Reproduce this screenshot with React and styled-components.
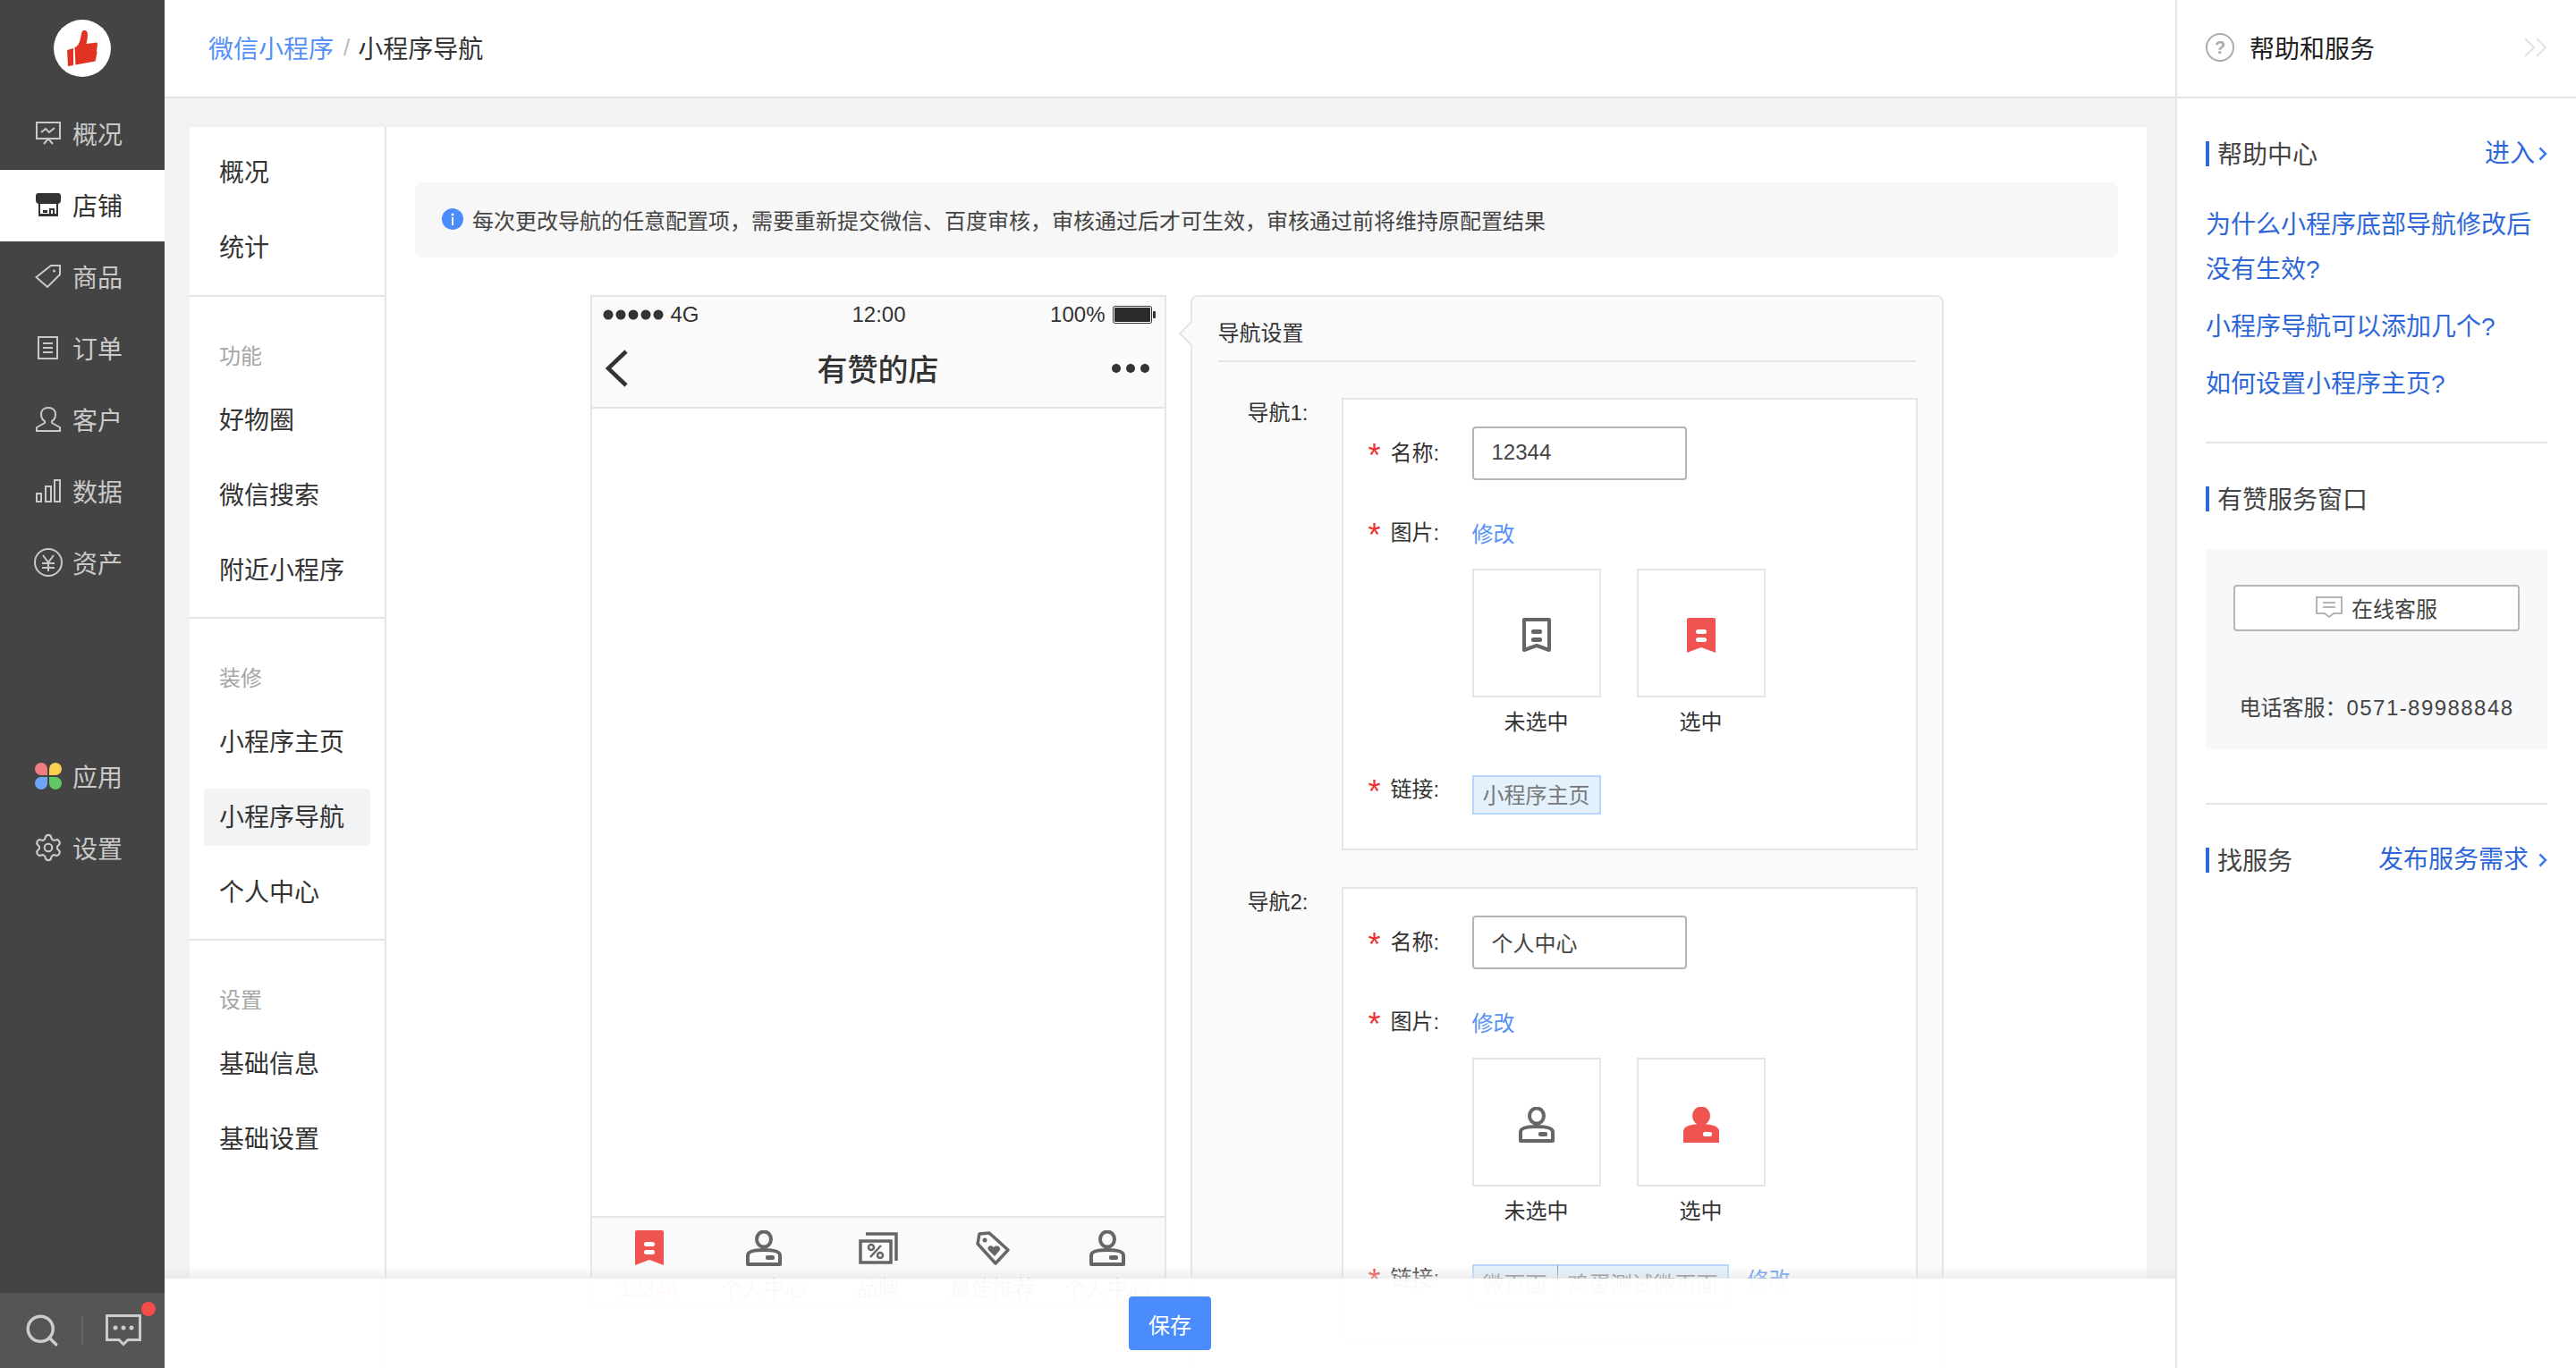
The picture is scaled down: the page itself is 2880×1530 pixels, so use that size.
import React from "react";
import styled, { createGlobalStyle } from "styled-components";
import { Search, Settings } from "lucide-react";

const GlobalStyle = createGlobalStyle`
  html, body {
    margin: 0;
    padding: 0;
    height: 1530px;
    overflow: hidden;
    background: #f2f2f2;
    color: #333;
    font-family: "Liberation Sans", "Noto Sans CJK SC", sans-serif;
    font-size: 24px;
  }
  * { box-sizing: border-box; }
`;

const Page = styled.div`
  display: flex;
  width: 2880px;
  height: 1530px;
  overflow: hidden;
`;

/* left dark bar */
const Sidebar = styled.aside`
  width: 184px;
  height: 100%;
  flex-shrink: 0;
  display: flex;
  flex-direction: column;
  background: #444;
`;

const LogoWrap = styled.div`
  height: 110px;
  flex-shrink: 0;
  padding-bottom: 2px;
  display: flex;
  align-items: center;
  justify-content: center;
`;

const Logo = styled.div`
  width: 64px;
  height: 64px;
  border-radius: 50%;
  background: #fff;
  display: flex;
  align-items: center;
  justify-content: center;
`;

const SideList = styled.div`
  display: flex;
  flex-direction: column;
  margin-top: ${({ $top }) => $top || 0}px;
`;

const SideItem = styled.div`
  height: 80px;
  padding: 0 0 2px 40px;
  display: flex;
  align-items: center;
  gap: 13px;
  font-size: 28px;
  color: ${({ $active }) => ($active ? "#333" : "#c9c9c9")};
  background: ${({ $active }) => ($active ? "#fff" : "transparent")};
`;

const SideIcon = styled.span`
  width: 28px;
  height: 32px;
  display: flex;
  align-items: center;
  justify-content: center;
  svg { flex-shrink: 0; }
`;

const SideBottom = styled.div`
  margin-top: auto;
  height: 84px;
  background: #555;
  display: flex;
  align-items: center;
  position: relative;
  padding-left: 26px;
`;

const BottomDivider = styled.span`
  width: 2px;
  height: 32px;
  margin: 0 25px 0 23px;
  background: #666;
`;

const RedDot = styled.span`
  position: absolute;
  left: 158px;
  top: 10px;
  width: 16px;
  height: 16px;
  border-radius: 50%;
  background: #f44c4c;
`;

/* middle column */
const Main = styled.main`
  flex: 1;
  min-width: 0;
  height: 100%;
  display: flex;
  flex-direction: column;
  position: relative;
  overflow: hidden;
`;

const Breadcrumb = styled.header`
  height: 110px;
  flex-shrink: 0;
  padding-left: 49px;
  padding-bottom: 2px;
  display: flex;
  align-items: center;
  background: #fff;
  border-bottom: 2px solid #e5e5e5;
  font-size: 28px;
`;

const CrumbLink = styled.span`
  color: #5591f7;
`;

const CrumbSep = styled.span`
  margin: 0 9px 0 11px;
  color: #bbb;
  font-size: 26px;
`;

const Content = styled.div`
  flex: 1;
  min-height: 0;
  padding: 32px 32px 0 28px;
  overflow: hidden;
`;

const Card = styled.section`
  display: flex;
  background: #fff;
  min-height: 1500px;
`;

const SubMenu = styled.nav`
  width: 220px;
  flex-shrink: 0;
  border-right: 2px solid #e5e5e5;
`;

const MenuGroup = styled.div`
  padding: ${({ $first }) => ($first ? "19px 0 1px" : "48px 0 0")};
  border-bottom: ${({ $last }) => ($last ? "none" : "2px solid #e5e5e5")};
`;

const MenuLabel = styled.div`
  height: 36px;
  line-height: 38px;
  margin: 0 0 22px 33px;
  color: #a5a5a5;
  font-size: 24px;
`;

const MenuItem = styled.div`
  width: 186px;
  height: 64px;
  line-height: 66px;
  margin: 0 0 20px 16px;
  padding-left: 17px;
  border-radius: 4px;
  font-size: 28px;
  color: #333;
  white-space: nowrap;
  background: ${({ $active }) => ($active ? "#f2f3f5" : "transparent")};
`;

const Pane = styled.div`
  flex: 1;
  min-width: 0;
  padding: 62px 32px 0;
`;

const Notice = styled.div`
  height: 84px;
  padding: 0 0 2px 30px;
  display: flex;
  align-items: center;
  gap: 10px;
  border-radius: 8px;
  background: #f7f7f7;
  color: #444;
`;

const InfoDot = styled.span`
  width: 24px;
  height: 24px;
  flex-shrink: 0;
`;

const Preview = styled.div`
  margin-top: 42px;
  display: flex;
  justify-content: center;
  align-items: flex-start;
  gap: 27px;
`;

/* phone mock */
const Phone = styled.div`
  width: 644px;
  flex-shrink: 0;
  border: 2px solid #e5e5e5;
  background: #fff;
`;

const PhoneTop = styled.div`
  height: 125px;
  background: #fafafa;
  border-bottom: 2px solid #e5e5e5;
`;

const StatusBar = styled.div`
  height: 40px;
  padding: 0 10px 0 12px;
  display: flex;
  align-items: center;
  justify-content: space-between;
  font-size: 24px;
  color: #333;
`;

const StatusSide = styled.div`
  width: 180px;
  display: flex;
  align-items: center;
  justify-content: ${({ $end }) => ($end ? "flex-end" : "flex-start")};
  gap: 8px;
`;

const TitleBar = styled.div`
  height: 81px;
  padding: 0 16px 2px 14px;
  display: grid;
  grid-template-columns: 1fr auto 1fr;
  align-items: center;
  justify-items: start;

  & > :last-child { justify-self: end; }
`;

const PhoneTitle = styled.div`
  font-size: 34px;
  color: #333;
  font-weight: 500;
  margin-left: 2px;
`;

const PhoneBody = styled.div`
  height: 903px;
`;

const TabBar = styled.div`
  display: grid;
  grid-template-columns: repeat(5, 1fr);
  height: 102px;
  padding-top: 14px;
  background: #fafafa;
  border-top: 2px solid #e5e5e5;
`;

const Tab = styled.div`
  display: flex;
  flex-direction: column;
  align-items: center;
  font-size: 24px;
  color: ${({ $active }) => ($active ? "#f05451" : "#666")};
`;

const TabIcon = styled.div`
  height: 40px;
  display: flex;
  align-items: center;
  justify-content: center;
`;

const TabText = styled.div`
  line-height: 36px;
  margin-top: 8px;
`;

/* settings panel */
const SetPanel = styled.div`
  width: 842px;
  flex-shrink: 0;
  position: relative;
  padding: 23px 29px 60px;
  border: 2px solid #e5e5e5;
  border-radius: 8px;
  background: #fafafa;

  &::before {
    content: "";
    position: absolute;
    left: -11px;
    top: 31px;
    width: 18px;
    height: 18px;
    background: #fafafa;
    border-left: 2px solid #e5e5e5;
    border-bottom: 2px solid #e5e5e5;
    transform: rotate(45deg);
  }
`;

const SetTitle = styled.div`
  height: 50px;
  line-height: 36px;
  border-bottom: 2px solid #e5e5e5;
  color: #333;
`;

const NavBlock = styled.div`
  display: flex;
  margin-top: ${({ $top }) => $top}px;
`;

const NavName = styled.div`
  width: 101px;
  margin-right: 37px;
  flex-shrink: 0;
  line-height: 34px;
  text-align: right;
  color: #333;
`;

const NavBox = styled.div`
  width: 644px;
  flex-shrink: 0;
  padding: 30px 28px 38px;
  border: 2px solid #e5e5e5;
  background: #fff;
`;

const Field = styled.div`
  display: flex;
  align-items: ${({ $top }) => ($top ? "flex-start" : "center")};
  min-height: ${({ $h }) => $h}px;
  margin-top: ${({ $mt }) => $mt || 0}px;
`;

const FieldLabel = styled.div`
  width: 116px;
  height: 36px;
  flex-shrink: 0;
  display: flex;
  line-height: 36px;
  color: #333;

  &::before {
    content: "*";
    width: 25px;
    color: #e33;
    font-size: 36px;
    line-height: 42px;
  }
`;

const TextBox = styled.div`
  width: 240px;
  height: 60px;
  padding: 0 0 2px 20px;
  display: flex;
  align-items: center;
  border: 2px solid #b5b5b5;
  border-radius: 4px;
  background: #fff;
  color: #444;
`;

const Action = styled.span`
  color: #5591f7;
  margin-left: ${({ $left }) => $left || 0}px;
  padding-bottom: 2px;
`;

const ImgRow = styled.div`
  margin: 18px 0 0 116px;
  display: flex;
  gap: 40px;
`;

const ImgCol = styled.div`
  width: 144px;
  text-align: center;
`;

const ImgBox = styled.div`
  width: 144px;
  height: 144px;
  padding-top: 6px;
  display: flex;
  align-items: center;
  justify-content: center;
  border: 2px solid #e5e5e5;
`;

const ImgCaption = styled.div`
  margin-top: 10px;
  line-height: 36px;
  color: #333;
`;

const LinkTag = styled.div`
  height: 44px;
  margin-top: 2px;
  padding: 0 10px 3px;
  display: flex;
  align-items: center;
  flex-shrink: 0;
  border: 2px solid #b7d6fb;
  background: #e3f1fd;
  color: #777;
`;

const TagBar = styled.span`
  width: 1px;
  height: 40px;
  margin: 0 11px;
  background: #999;
`;

/* fixed save bar */
const SaveBar = styled.div`
  position: absolute;
  left: 0;
  right: 0;
  bottom: 0;
  height: 100px;
  display: flex;
  align-items: center;
  justify-content: center;
  background: rgba(255, 255, 255, 0.96);

  &::before {
    content: "";
    position: absolute;
    left: 0;
    right: 0;
    top: -14px;
    height: 14px;
    background: linear-gradient(to bottom, rgba(225, 225, 225, 0), rgba(225, 225, 225, 0.55));
  }
`;

const SaveButton = styled.button`
  width: 92px;
  height: 60px;
  padding: 0;
  border: none;
  border-radius: 4px;
  background: #4a8cfb;
  color: #fff;
  font-family: inherit;
  font-size: 24px;
`;

/* right help panel */
const Help = styled.aside`
  width: 448px;
  height: 100%;
  flex-shrink: 0;
  background: #fff;
  border-left: 2px solid #e5e5e5;
`;

const HelpHead = styled.div`
  height: 110px;
  padding: 0 32px 2px;
  display: flex;
  align-items: center;
  border-bottom: 2px solid #e5e5e5;
  color: #222;
  font-size: 28px;
`;

const HelpBadge = styled.span`
  width: 32px;
  height: 32px;
  margin-right: 17px;
  display: flex;
  align-items: center;
  justify-content: center;
  border: 2px solid #aaa;
  border-radius: 50%;
  color: #aaa;
  font-size: 20px;
  font-weight: 700;
`;

const HelpFold = styled.span`
  margin-left: auto;
  display: flex;
`;

const HelpBody = styled.div`
  padding: 48px 32px 0;
`;

const SectionHead = styled.div`
  height: 28px;
  display: flex;
  align-items: center;
  justify-content: space-between;
`;

const SectionTitle = styled.div`
  height: 28px;
  padding-left: 9px;
  line-height: 32px;
  border-left: 4px solid #2e67d8;
  color: #444;
  font-size: 28px;
`;

const MoreLink = styled.div`
  display: flex;
  align-items: center;
  gap: ${({ $gap }) => $gap}px;
  color: #2e67d8;
  font-size: 28px;
  line-height: 30px;
`;

const QList = styled.div`
  margin-top: 41px;
  display: flex;
  flex-direction: column;
  gap: 14px;
`;

const QLink = styled.div`
  line-height: 50px;
  color: #2e67d8;
  font-size: 28px;
`;

const Rule = styled.div`
  height: 2px;
  background: #e5e5e5;
  margin: ${({ $top }) => $top}px 0 48px;
`;

const ServiceBox = styled.div`
  height: 224px;
  margin-top: 42px;
  padding: 40px 31px 0;
  border-radius: 4px;
  background: #f7f8fa;
`;

const ServiceButton = styled.div`
  height: 52px;
  padding-bottom: 2px;
  display: flex;
  align-items: center;
  justify-content: center;
  gap: 10px;
  border: 2px solid #b5b5b5;
  border-radius: 4px;
  background: #fff;
  color: #444;
  font-size: 24px;
`;

const PhoneLine = styled.div`
  margin-top: 68px;
  line-height: 36px;
  text-align: center;
  white-space: nowrap;
  color: #444;
`;

const PhoneNumber = styled.span`
  letter-spacing: 1.45px;
`;

/* drawings */
const ThumbIcon = () => (
  <svg width="34" height="40" viewBox="0 0 34 40" fill="#e03322">
    <path d="M0 22l7-2v19l-6 1z" />
    <path d="M8.500 19c3-1 5-4 6-8 1-3 1-6 2-9 1-3 5-3 6 0 1 3 0 9-1 13l12-1.500 .5 3-1 6 .5 2-1.500 8-.5 2-22 4z" />
  </svg>
);

const MonitorIcon = () => (
  <svg width="28" height="28" viewBox="0 0 28 28" fill="none" stroke="#c9c9c9" strokeWidth="2">
    <path d="M1 2h26v18H1zM1 2h4M6 13l5-4 4 4 6-5M9 26l5-6 5 6" />
  </svg>
);

const StoreIcon = () => (
  <svg width="28" height="26" viewBox="0 0 28 26" fill="#333">
    <path d="M3 0h22a3 3 0 0 1 3 3v5c0 3-2 4-4 4H4c-2 0-4-1-4-4V3a3 3 0 0 1 3-3z" />
    <path d="M3 11h2v12h18V11h2v15H3z" />
    <path d="M8 22v-3h5v3zM15 24v-7h6v7h-2v-5h-2v5z" />
  </svg>
);

const TagIcon = () => (
  <svg width="30" height="28" viewBox="0 0 30 28" fill="none" stroke="#c9c9c9" strokeWidth="2">
    <path d="M1.500 15L18 2h10v10L14 26z" />
    <circle cx="21.500" cy="8" r="1.500" fill="#c9c9c9" stroke="none" />
  </svg>
);

const OrderIcon = () => (
  <svg width="24" height="26" viewBox="0 0 24 26" fill="none" stroke="#c9c9c9" strokeWidth="2">
    <path d="M1 1h21v24H1zM6 8h11M6 13h11M6 18h11" />
  </svg>
);

const UserIcon = () => (
  <svg width="28" height="28" viewBox="0 0 28 28" fill="none" stroke="#c9c9c9" strokeWidth="2">
    <path d="M10 16c-2-1-4-4-4-8 0-4 3-7 8-7s8 3 8 7c0 4-2 7-4 8v2l9 5v4H1v-4l9-5z" />
  </svg>
);

const BarsIcon = () => (
  <svg width="28" height="28" viewBox="0 0 28 28" fill="none" stroke="#c9c9c9" strokeWidth="2">
    <path d="M1 17h5v9H1zM11 9h6v17h-6zM21 2h6v24h-6z" />
  </svg>
);

const YuanIcon = () => (
  <svg width="32" height="32" viewBox="0 0 32 32" fill="none" stroke="#c9c9c9" strokeWidth="2">
    <circle cx="16" cy="16" r="15" />
    <path d="M10 8l6 8 6-8M9 17h14M9 22h14M16 16v10" />
  </svg>
);

const PetalIcon = () => (
  <svg width="30" height="30" viewBox="0 0 30 30">
    <path d="M14 14H7a7 7 0 0 1 0-14h0a7 7 0 0 1 7 7z" fill="#f27c7f" />
    <path d="M16 14h7a7 7 0 0 0 0-14h0a7 7 0 0 0-7 7z" fill="#fbcf4f" />
    <path d="M14 16H7a7 7 0 0 0 0 14h0a7 7 0 0 0 7-7z" fill="#6ea6f6" />
    <path d="M16 16h7a7 7 0 0 1 0 14h0a7 7 0 0 1-7-7z" fill="#62c765" />
  </svg>
);

const ChatDots = () => (
  <svg width="40" height="36" viewBox="0 0 40 36" fill="none">
    <path d="M1.500 1.500h37v27H25l-5 5-5-5H1.500z" stroke="#ccc" strokeWidth="3" />
    <circle cx="11" cy="15" r="2.500" fill="#ccc" />
    <circle cx="20" cy="15" r="2.500" fill="#ccc" />
    <circle cx="29" cy="15" r="2.500" fill="#ccc" />
  </svg>
);

const InfoIcon = () => (
  <InfoDot as="svg" viewBox="0 0 24 24">
    <circle cx="12" cy="12" r="12" fill="#4a8cfb" />
    <circle cx="12" cy="7" r="1.500" fill="#fff" />
    <rect x="11" y="10" width="2" height="9" fill="#fff" />
  </InfoDot>
);

const SignalDots = () => (
  <svg width="68" height="14" viewBox="0 0 68 14" fill="#333">
    <circle cx="6" cy="7" r="5.500" />
    <circle cx="20" cy="7" r="5.500" />
    <circle cx="34" cy="7" r="5.500" />
    <circle cx="48" cy="7" r="5.500" />
    <circle cx="62" cy="7" r="5.500" />
  </svg>
);

const Battery = () => (
  <svg width="48" height="20" viewBox="0 0 48 20">
    <rect x="0.500" y="0.500" width="43" height="19" rx="2" fill="#fff" stroke="#333" />
    <rect x="2" y="2" width="40" height="16" rx="1" fill="#2a2a2a" />
    <rect x="45" y="6" width="3" height="8" rx="1" fill="#333" />
  </svg>
);

const BackArrow = () => (
  <svg width="26" height="42" viewBox="0 0 26 42" fill="none" stroke="#333" strokeWidth="4.500">
    <path d="M24 2L4 21l20 19" />
  </svg>
);

const MoreDots = () => (
  <svg width="44" height="12" viewBox="0 0 44 12" fill="#333">
    <circle cx="6" cy="6" r="5" />
    <circle cx="22" cy="6" r="5" />
    <circle cx="38" cy="6" r="5" />
  </svg>
);

const BookmarkIcon = ({ on }) =>
  on ? (
    <svg width="32" height="40" viewBox="0 0 32 40">
      <path d="M0 2a2 2 0 0 1 2-2h28a2 2 0 0 1 2 2v37l-16-6-16 6z" fill="#f05451" />
      <rect x="10" y="13" width="12" height="5" rx="2.500" fill="#fff" />
      <rect x="10" y="22" width="12" height="5" rx="2.500" fill="#fff" />
    </svg>
  ) : (
    <svg width="32" height="40" viewBox="0 0 32 40">
      <path d="M2 2h28v34l-14-5-14 5z" fill="none" stroke="#666" strokeWidth="4" strokeLinejoin="round" />
      <rect x="10" y="13" width="12" height="5" rx="2" fill="#666" />
      <rect x="10" y="22" width="12" height="5" rx="2" fill="#666" />
    </svg>
  );

const PersonIcon = ({ on }) =>
  on ? (
    <svg width="40" height="40" viewBox="0 0 40 40">
      <ellipse cx="20" cy="10" rx="10" ry="10.500" fill="#f05451" />
      <path d="M0 40V27c0-6 11-8 20-8s20 2 20 8v13z" fill="#f05451" />
      <rect x="22" y="28" width="10" height="5" rx="2" fill="#fff" />
    </svg>
  ) : (
    <svg width="40" height="40" viewBox="0 0 40 40" fill="none" stroke="#666" strokeWidth="4">
      <ellipse cx="20" cy="10" rx="8" ry="8.500" />
      <path d="M2 38V28c0-5 10-6 18-6s18 1 18 6v10z" strokeLinejoin="round" />
      <rect x="22" y="28" width="10" height="5" rx="2" fill="#666" stroke="none" />
    </svg>
  );

const BrandIcon = () => (
  <svg width="44" height="36" viewBox="0 0 44 36" fill="none" stroke="#666" strokeWidth="3.500">
    <path d="M8 2h34v30M2 10h34v24H2z" />
    <path d="M13 28l12-13" strokeWidth="2.500" />
    <circle cx="14" cy="17" r="3" strokeWidth="2.500" />
    <circle cx="24" cy="26" r="3" strokeWidth="2.500" />
  </svg>
);

const HeartTagIcon = () => (
  <svg width="38" height="38" viewBox="0 0 38 38" fill="none" stroke="#666" strokeWidth="3.500">
    <path d="M2 14L4 3l11-1 21 19-14 15z" strokeLinejoin="round" />
    <circle cx="10" cy="10" r="2.500" fill="#666" stroke="none" />
    <path d="M21 28l-7-7c-2-3 2-7 6-3 3-3 8-1 7 3z" fill="#666" stroke="none" />
  </svg>
);

const Chevron = () => (
  <svg width="10" height="16" viewBox="0 0 10 16" fill="none" stroke="#3b7cf0" strokeWidth="2.500">
    <path d="M1.500 1.500L8 8l-6.500 6.500" />
  </svg>
);

const DoubleFold = () => (
  <svg width="26" height="22" viewBox="0 0 26 22" fill="none" stroke="#e2e2e2" strokeWidth="2">
    <path d="M1 1l10 10L1 21M14 1l10 10-10 10" />
  </svg>
);

const ChatLines = () => (
  <svg width="30" height="24" viewBox="0 0 30 24" fill="none" stroke="#b5b5b5" strokeWidth="2">
    <path d="M1 1h28v18H20l-5 4-5-4H1z" />
    <path d="M8 7h14M8 12h14" />
  </svg>
);

const sideTop = [
  { name: "概况", icon: <MonitorIcon /> },
  { name: "店铺", icon: <StoreIcon />, active: true },
  { name: "商品", icon: <TagIcon /> },
  { name: "订单", icon: <OrderIcon /> },
  { name: "客户", icon: <UserIcon /> },
  { name: "数据", icon: <BarsIcon /> },
  { name: "资产", icon: <YuanIcon /> },
];

const sideBottom = [
  { name: "应用", icon: <PetalIcon /> },
  { name: "设置", icon: <Settings size={34} color="#c9c9c9" strokeWidth={1.5} /> },
];

const menuGroups = [
  { items: ["概况", "统计"] },
  { label: "功能", items: ["好物圈", "微信搜索", "附近小程序"] },
  { label: "装修", items: ["小程序主页", "小程序导航", "个人中心"] },
  { label: "设置", items: ["基础信息", "基础设置"] },
];

const tabs = [
  { name: "12344", icon: <BookmarkIcon on />, active: true },
  { name: "个人中心", icon: <PersonIcon /> },
  { name: "品牌", icon: <BrandIcon /> },
  { name: "最佳推荐", icon: <HeartTagIcon /> },
  { name: "个人中心", icon: <PersonIcon /> },
];

const questions = [
  "为什么小程序底部导航修改后没有生效?",
  "小程序导航可以添加几个?",
  "如何设置小程序主页?",
];

// full-width punctuation, written as escapes so it stays full-width
const noticeText =
  "每次更改导航的任意配置项\uFF0C需要重新提交微信、百度审核\uFF0C审核通过后才可生效\uFF0C审核通过前将维持原配置结果";
const phoneLabel = "电话客服\uFF1A";

const NavSetting = ({ title, top, value, Icon, link, canEdit }) => (
  <NavBlock $top={top}>
    <NavName>{title}</NavName>
    <NavBox>
      <Field $h={60}>
        <FieldLabel>名称:</FieldLabel>
        <TextBox>{value}</TextBox>
      </Field>
      <Field $h={44} $mt={37}>
        <FieldLabel>图片:</FieldLabel>
        <Action>修改</Action>
      </Field>
      <ImgRow>
        <ImgCol>
          <ImgBox>
            <Icon />
          </ImgBox>
          <ImgCaption>未选中</ImgCaption>
        </ImgCol>
        <ImgCol>
          <ImgBox>
            <Icon on />
          </ImgBox>
          <ImgCaption>选中</ImgCaption>
        </ImgCol>
      </ImgRow>
      <Field $h={46} $mt={39} $top>
        <FieldLabel>链接:</FieldLabel>
        <LinkTag>{link}</LinkTag>
        {canEdit && <Action $left={21}>修改</Action>}
      </Field>
    </NavBox>
  </NavBlock>
);

const App = () => {
  return (
    <Page>
      <GlobalStyle />
      <Sidebar>
        <LogoWrap>
          <Logo>
            <ThumbIcon />
          </Logo>
        </LogoWrap>
        <SideList>
          {sideTop.map((item) => (
            <SideItem key={item.name} $active={item.active}>
              <SideIcon>{item.icon}</SideIcon>
              {item.name}
            </SideItem>
          ))}
        </SideList>
        <SideList $top={159}>
          {sideBottom.map((item) => (
            <SideItem key={item.name}>
              <SideIcon>{item.icon}</SideIcon>
              {item.name}
            </SideItem>
          ))}
        </SideList>
        <SideBottom>
          <Search size={42} color="#ccc" strokeWidth={2} />
          <BottomDivider />
          <ChatDots />
          <RedDot />
        </SideBottom>
      </Sidebar>

      <Main>
        <Breadcrumb>
          <CrumbLink>微信小程序</CrumbLink>
          <CrumbSep>/</CrumbSep>
          小程序导航
        </Breadcrumb>
        <Content>
          <Card>
            <SubMenu>
              {menuGroups.map((group, index) => (
                <MenuGroup key={index} $first={index === 0} $last={index === menuGroups.length - 1}>
                  {group.label && <MenuLabel>{group.label}</MenuLabel>}
                  {group.items.map((name) => (
                    <MenuItem key={name} $active={name === "小程序导航"}>
                      {name}
                    </MenuItem>
                  ))}
                </MenuGroup>
              ))}
            </SubMenu>
            <Pane>
              <Notice>
                <InfoIcon />
                {noticeText}
              </Notice>
              <Preview>
                <Phone>
                  <PhoneTop>
                    <StatusBar>
                      <StatusSide>
                        <SignalDots />
                        4G
                      </StatusSide>
                      12:00
                      <StatusSide $end>
                        100%
                        <Battery />
                      </StatusSide>
                    </StatusBar>
                    <TitleBar>
                      <BackArrow />
                      <PhoneTitle>有赞的店</PhoneTitle>
                      <MoreDots />
                    </TitleBar>
                  </PhoneTop>
                  <PhoneBody />
                  <TabBar>
                    {tabs.map((tab, index) => (
                      <Tab key={index} $active={tab.active}>
                        <TabIcon>{tab.icon}</TabIcon>
                        <TabText>{tab.name}</TabText>
                      </Tab>
                    ))}
                  </TabBar>
                </Phone>
                <SetPanel>
                  <SetTitle>导航设置</SetTitle>
                  <NavSetting title="导航1:" top={40} value="12344" Icon={BookmarkIcon} link="小程序主页" />
                  <NavSetting
                    title="导航2:"
                    top={41}
                    value="个人中心"
                    Icon={PersonIcon}
                    canEdit
                    link={
                      <>
                        微页面
                        <TagBar />
                        鸡蛋测试微页面
                      </>
                    }
                  />
                </SetPanel>
              </Preview>
            </Pane>
          </Card>
        </Content>
        <SaveBar>
          <SaveButton>保存</SaveButton>
        </SaveBar>
      </Main>

      <Help>
        <HelpHead>
          <HelpBadge>?</HelpBadge>
          帮助和服务
          <HelpFold>
            <DoubleFold />
          </HelpFold>
        </HelpHead>
        <HelpBody>
          <SectionHead>
            <SectionTitle>帮助中心</SectionTitle>
            <MoreLink $gap={4}>
              进入
              <Chevron />
            </MoreLink>
          </SectionHead>
          <QList>
            {questions.map((q) => (
              <QLink key={q}>{q}</QLink>
            ))}
          </QList>
          <Rule $top={39} />
          <SectionTitle>有赞服务窗口</SectionTitle>
          <ServiceBox>
            <ServiceButton>
              <ChatLines />
              在线客服
            </ServiceButton>
            <PhoneLine>
              {phoneLabel}
              <PhoneNumber>0571-89988848</PhoneNumber>
            </PhoneLine>
          </ServiceBox>
          <Rule $top={60} />
          <SectionHead>
            <SectionTitle>找服务</SectionTitle>
            <MoreLink $gap={11}>
              发布服务需求
              <Chevron />
            </MoreLink>
          </SectionHead>
        </HelpBody>
      </Help>
    </Page>
  );
};

export default App;
